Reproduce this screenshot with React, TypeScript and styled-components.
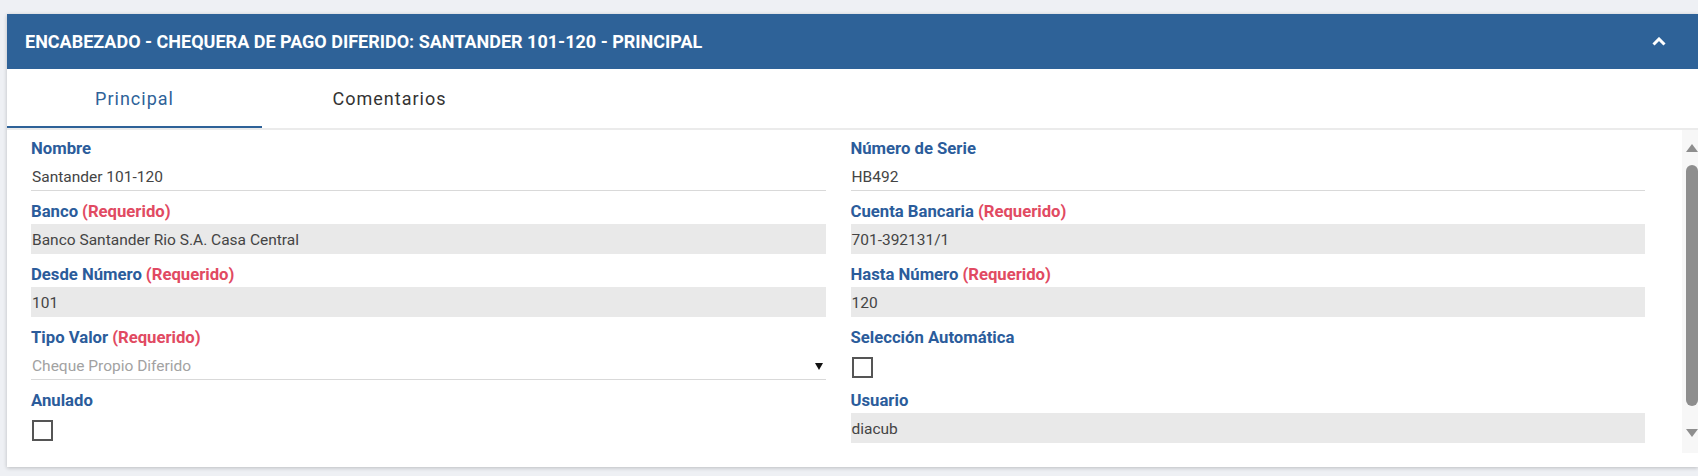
import React from 'react';
import styled, { createGlobalStyle } from 'styled-components';

interface IField {
  label: string;
  required?: boolean;
  kind: 'text' | 'readonly' | 'select' | 'checkbox';
  value?: string;
}

const fields: IField[] = [
  { label: 'Nombre', kind: 'text', value: 'Santander 101-120' },
  { label: 'Número de Serie', kind: 'text', value: 'HB492' },
  { label: 'Banco', required: true, kind: 'readonly', value: 'Banco Santander Rio S.A. Casa Central' },
  { label: 'Cuenta Bancaria', required: true, kind: 'readonly', value: '701-392131/1' },
  { label: 'Desde Número', required: true, kind: 'readonly', value: '101' },
  { label: 'Hasta Número', required: true, kind: 'readonly', value: '120' },
  { label: 'Tipo Valor', required: true, kind: 'select', value: 'Cheque Propio Diferido' },
  { label: 'Selección Automática', kind: 'checkbox' },
  { label: 'Anulado', kind: 'checkbox' },
  { label: 'Usuario', kind: 'readonly', value: 'diacub' },
];

const tabs = ['Principal', 'Comentarios'];

const App = () => {
  return (
    <>
      <GlobalStyle />
      <Page>
        <Card>
          <Header>
            <Title>ENCABEZADO - CHEQUERA DE PAGO DIFERIDO: SANTANDER 101-120 - PRINCIPAL</Title>
            <svg width='14' height='9' viewBox='0 0 14 9'>
              <polyline points='1.5,7.5 7,2 12.5,7.5' fill='none' stroke='#fff' strokeWidth='3' />
            </svg>
          </Header>
          <TabBar>
            {tabs.map((tab, i) => (
              <Tab key={tab} $active={i === 0}>
                {tab}
              </Tab>
            ))}
          </TabBar>
          <Body>
            <Form>
              {fields.map((field) => (
                <Field key={field.label}>
                  <Label>
                    {field.label}
                    {field.required && <Required>(Requerido)</Required>}
                  </Label>
                  {field.kind === 'checkbox' ? (
                    <CheckWrap>
                      <CheckBox />
                    </CheckWrap>
                  ) : (
                    <Control $kind={field.kind}>
                      <span>{field.value}</span>
                      {field.kind === 'select' && <Caret />}
                    </Control>
                  )}
                </Field>
              ))}
            </Form>
            <ScrollTrack>
              <Arrow $dir='up' />
              <Thumb />
              <Arrow $dir='down' />
            </ScrollTrack>
          </Body>
        </Card>
      </Page>
    </>
  );
};

const GlobalStyle = createGlobalStyle`
  body {
    margin: 0;
    background: #eef0f4;
    font-family: Roboto, 'Liberation Sans', sans-serif;
  }
`;

const Page = styled.div`
  padding: 14px 0 9px 7px;
`;

const Card = styled.section`
  background: #fff;
  box-shadow: 0 1px 4px rgba(0, 0, 0, 0.22);
  padding-bottom: 14px;
`;

const Header = styled.header`
  display: flex;
  align-items: center;
  justify-content: space-between;
  height: 55px;
  padding: 0 32px 0 18px;
  background: #2e6298;
`;

const Title = styled.h2`
  margin: 0;
  font-size: 18px;
  font-weight: 700;
  color: #fff;
`;

const TabBar = styled.nav`
  display: flex;
  border-bottom: 2px solid #ebebeb;
`;

const Tab = styled.div<{ $active: boolean }>`
  display: flex;
  align-items: center;
  justify-content: center;
  width: 255px;
  height: 59px;
  font-size: 18px;
  letter-spacing: 1px;
  color: ${({ $active }) => ($active ? '#2e6298' : '#333')};
  box-shadow: ${({ $active }) => ($active ? 'inset 0 -2px 0 #2e6298' : 'none')};
`;

const Body = styled.div`
  display: flex;
  height: 323px;
`;

const Form = styled.div`
  flex: 1;
  overflow: hidden;
  display: grid;
  grid-template-columns: 1fr 1fr;
  column-gap: 25px;
  align-content: start;
  padding: 7px 37px 0 24px;
`;

const Field = styled.div`
  display: flex;
  flex-direction: column;
  margin-bottom: 9px;
`;

const Label = styled.label`
  font-size: 16.7px;
  font-weight: 700;
  line-height: 24px;
  color: #2b5c9b;
`;

const Required = styled.span`
  margin-left: 4px;
  color: #e14a62;
`;

const Control = styled.div<{ $kind: string }>`
  display: flex;
  align-items: center;
  justify-content: space-between;
  box-sizing: border-box;
  height: 30px;
  padding: 3px 3px 0 1px;
  font-size: 15.5px;
  color: ${({ $kind }) => ($kind === 'select' ? '#a2a2a2' : '#444')};
  background: ${({ $kind }) => ($kind === 'readonly' ? '#e9e9e9' : 'transparent')};
  border-bottom: 1px solid ${({ $kind }) => ($kind === 'readonly' ? '#e9e9e9' : '#d9d9d9')};
`;

const Caret = styled.span`
  width: 0;
  height: 0;
  margin-top: 1px;
  border-left: 4px solid transparent;
  border-right: 4px solid transparent;
  border-top: 7px solid #111;
`;

const CheckWrap = styled.div`
  height: 30px;
  padding-top: 7px;
  box-sizing: border-box;
`;

const CheckBox = styled.div`
  width: 21px;
  height: 21px;
  margin-left: 1px;
  box-sizing: border-box;
  border: 2px solid #555;
`;

const ScrollTrack = styled.div`
  display: flex;
  flex-direction: column;
  align-items: center;
  width: 16px;
  padding: 14px 0 16px 4px;
  box-sizing: border-box;
  background: #f7f7f7;
`;

const Thumb = styled.div`
  flex: 1;
  width: 12px;
  margin: 13px 0 23px;
  border-radius: 6px;
  background: #8e8e8e;
`;

const Arrow = styled.div<{ $dir: 'up' | 'down' }>`
  width: 0;
  height: 0;
  border-left: 6px solid transparent;
  border-right: 6px solid transparent;
  ${({ $dir }) =>
    $dir === 'up' ? 'border-bottom: 8px solid #8e8e8e;' : 'border-top: 8px solid #8e8e8e;'}
`;

export default App;
